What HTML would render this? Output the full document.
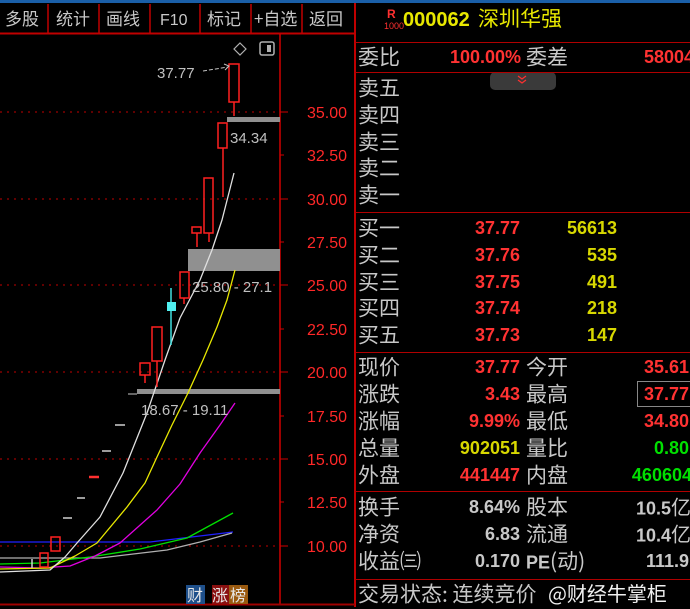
<!DOCTYPE html>
<html><head><meta charset="utf-8">
<style>
html,body{margin:0;padding:0;background:#000;}
body{width:690px;height:607px;position:relative;overflow:hidden;font-family:"Liberation Sans","Noto Sans CJK SC",sans-serif;}
.t{position:absolute;white-space:nowrap;line-height:1;}
.lb{font-family:"Noto Sans CJK SC","WenQuanYi Zen Hei",sans-serif;font-size:21px;color:#c8c8c8;transform:translateY(-50%);}
.n{font-family:"Liberation Sans",sans-serif;font-weight:bold;font-size:18px;transform:translateY(-50%);}
.r{color:#ff3232}.y{color:#d8d800}.g{color:#00e000}.w{color:#c8c8c8}
.hl{position:absolute;left:355px;width:335px;height:1px;background:#b00000;}
</style></head><body>
<svg width="690" height="607" style="position:absolute;left:0;top:0">
<rect x="0" y="0" width="690" height="3" fill="#1a5fa8"/>
<line x1="0" y1="33.5" x2="355" y2="33.5" stroke="#c00000" stroke-width="2"/>
<g stroke="#c00000" stroke-width="1.5">
<line x1="48" y1="4" x2="48" y2="33"/><line x1="99" y1="4" x2="99" y2="33"/><line x1="150" y1="4" x2="150" y2="33"/><line x1="200" y1="4" x2="200" y2="33"/><line x1="251" y1="4" x2="251" y2="33"/><line x1="302" y1="4" x2="302" y2="33"/>
</g>
<g font-family="Noto Sans CJK SC,sans-serif" font-size="17" fill="#c8c8c8">
<text x="5" y="25">多股</text><text x="56" y="25">统计</text><text x="106" y="25">画线</text>
<text x="160" y="25" font-family="Liberation Sans,sans-serif" font-size="16">F10</text>
<text x="207" y="25">标记</text><text x="254" y="25">+自选</text><text x="309" y="25">返回</text>
</g>
<line x1="280" y1="34" x2="280" y2="604" stroke="#d00000" stroke-width="1.5"/>
<line x1="355" y1="3" x2="355" y2="607" stroke="#c00000" stroke-width="2"/>
<line x1="0" y1="604.5" x2="355" y2="604.5" stroke="#a00000" stroke-width="2"/>
<g stroke="#c00000" stroke-width="1" stroke-dasharray="2,5">
<line x1="0" y1="112" x2="280" y2="112"/><line x1="0" y1="199" x2="280" y2="199"/><line x1="0" y1="285" x2="280" y2="285"/><line x1="0" y1="372" x2="280" y2="372"/><line x1="0" y1="459" x2="280" y2="459"/><line x1="0" y1="546" x2="280" y2="546"/>
</g>
<g stroke="#d00000" stroke-width="1">
<line x1="280" y1="112" x2="288" y2="112"/><line x1="280" y1="155" x2="284" y2="155"/><line x1="280" y1="199" x2="288" y2="199"/><line x1="280" y1="242" x2="284" y2="242"/><line x1="280" y1="285" x2="288" y2="285"/><line x1="280" y1="329" x2="284" y2="329"/><line x1="280" y1="372" x2="288" y2="372"/><line x1="280" y1="416" x2="284" y2="416"/><line x1="280" y1="459" x2="288" y2="459"/><line x1="280" y1="502" x2="284" y2="502"/><line x1="280" y1="546" x2="288" y2="546"/>
</g>
<g font-family="Liberation Sans,sans-serif" font-size="16" fill="#ff2828" text-anchor="end">
<text x="347" y="118">35.00</text><text x="347" y="161">32.50</text><text x="347" y="205">30.00</text><text x="347" y="248">27.50</text><text x="347" y="291">25.00</text><text x="347" y="335">22.50</text><text x="347" y="378">20.00</text><text x="347" y="422">17.50</text><text x="347" y="465">15.00</text><text x="347" y="508">12.50</text><text x="347" y="552">10.00</text>
</g>
<rect x="227" y="117" width="53" height="5" fill="#909090"/>
<rect x="188" y="249" width="92" height="22" fill="#909090"/>
<rect x="137" y="389" width="143" height="5" fill="#909090"/>
<line x1="128" y1="394" x2="137" y2="394" stroke="#c8c8c8" stroke-width="1"/>
<g fill="none" stroke-width="1.3" stroke-linejoin="round">
<polyline points="0,542 150,542 233,532" stroke="#2020ff"/>
<polyline points="0,558 100,558 167,550 200,542 232,533" stroke="#b0b0b0"/>
<polyline points="0,564 40,563 90,557 140,549 187,538 233,513" stroke="#00e000"/>
<polyline points="0,567 40,568 70,566 95,556 120,543 157,510 180,484 200,453 220,425 235,403" stroke="#e000e0"/>
<polyline points="0,569 50,568 75,556 97,543 127,507 145,483 157,457 172,425 188,393 203,360 217,327 227,300 235,270" stroke="#e8e800"/>
<polyline points="0,572 50,570 65,557 77,543 100,517 123,473 147,413 165,360 180,318 200,280 212,250 222,220 234,173" stroke="#e0e0e0"/>
</g>
<g stroke-width="1.5">
<line x1="63" y1="518" x2="72" y2="518" stroke="#d0d0d0"/>
<line x1="77" y1="498" x2="85" y2="498" stroke="#d0d0d0"/>
<line x1="89" y1="477" x2="99" y2="477" stroke="#ff3030" stroke-width="2.5"/>
<line x1="102" y1="451" x2="111" y2="451" stroke="#d0d0d0"/>
<line x1="115" y1="425" x2="125" y2="425" stroke="#d0d0d0"/>
<line x1="32" y1="559" x2="32" y2="568" stroke="#d0d0d0"/>
</g>
<g fill="none" stroke="#ff2020" stroke-width="1.5">
<rect x="40" y="553" width="8" height="14"/>
<rect x="51" y="537" width="9" height="14"/>
<line x1="145" y1="375" x2="145" y2="383"/><rect x="140" y="363" width="10" height="12"/>
<line x1="157" y1="361" x2="157" y2="387"/><rect x="152" y="327" width="10" height="34"/>
<line x1="184" y1="298" x2="184" y2="304"/><rect x="180" y="272" width="9" height="26"/>
<line x1="197" y1="233" x2="197" y2="247"/><rect x="192" y="227" width="9" height="6"/>
<line x1="209" y1="233" x2="209" y2="242"/><rect x="204" y="178" width="9" height="55"/>
<line x1="223" y1="148" x2="223" y2="197"/><rect x="218" y="123" width="9" height="25"/>
<line x1="234" y1="102" x2="234" y2="116"/><rect x="229" y="64" width="10" height="38"/>
</g>
<line x1="171" y1="288" x2="171" y2="345" stroke="#40e0e0" stroke-width="1.5"/>
<rect x="167" y="302" width="9" height="9" fill="#50f0f0"/>
<g font-family="Liberation Sans,sans-serif" font-size="15" fill="#c0c0c0">
<text x="157" y="78">37.77</text>
<text x="230" y="143">34.34</text>
<text x="192" y="292">25.80 - 27.1</text>
<text x="141" y="415">18.67 - 19.11</text>
</g>
<path d="M203 71 L228 67" stroke="#c0c0c0" stroke-width="1" stroke-dasharray="4,2"/>
<path d="M224 64 L229 66 L225 70" stroke="#c0c0c0" fill="none" stroke-width="1"/>
<path d="M240 43 L246 49 L240 55 L234 49 Z" fill="none" stroke="#b0b0b0" stroke-width="1.2"/>
<rect x="260" y="42" width="14" height="13" rx="2" fill="none" stroke="#b0b0b0" stroke-width="1.5"/>
<rect x="267" y="45" width="4" height="7" fill="#b0b0b0"/>
<rect x="186" y="585" width="19" height="19" fill="#1e4f8a"/>
<rect x="212" y="585" width="17" height="19" fill="#8a1010"/>
<rect x="229" y="585" width="19" height="19" fill="#9a5a10"/>
<g font-family="Noto Sans CJK SC,sans-serif" font-size="16" fill="#e8e8e8">
<text x="187" y="601">财</text><text x="212" y="601">涨</text><text x="230" y="601">榜</text>
</g>
<rect x="490" y="72" width="66" height="18" rx="5" fill="#3a3a3a"/>
<path d="M518 76 L522 79 L526 76 M518 80 L522 83 L526 80" stroke="#ff3030" fill="none" stroke-width="1.2"/>
</svg>

<div class="t" style="left:387px;top:8px;color:#ff3030;font-size:12px;font-weight:bold">R</div>
<div class="t" style="left:384px;top:22px;color:#ff3030;font-size:9px">1000</div>
<div class="t" style="left:403px;top:10px;color:#e8e800;font-size:20px;font-weight:bold;font-family:'Liberation Sans',sans-serif">000062</div>
<div class="t" style="left:478px;top:8px;color:#e8e800;font-size:21px;font-family:'Noto Sans CJK SC',sans-serif">深圳华强</div>

<div class="hl" style="top:42px"></div>
<div class="hl" style="top:72px"></div>
<div class="hl" style="top:212px"></div>
<div class="hl" style="top:352px"></div>
<div class="hl" style="top:491px"></div>
<div class="hl" style="top:579px"></div>

<div class="t lb" style="left:358px;top:57px">委比</div>
<div class="t n r" style="right:169px;top:57px">100.00%</div>
<div class="t lb" style="left:526px;top:57px">委差</div>
<div class="t n r" style="right:-4px;top:57px">58004</div>

<div class="t lb" style="left:358px;top:88px">卖五</div>
<div class="t lb" style="left:358px;top:115px">卖四</div>
<div class="t lb" style="left:358px;top:142px">卖三</div>
<div class="t lb" style="left:358px;top:168px">卖二</div>
<div class="t lb" style="left:358px;top:195px">卖一</div>

<div class="t lb" style="left:358px;top:228px">买一</div><div class="t n r" style="right:170px;top:228px">37.77</div><div class="t n y" style="right:73px;top:228px">56613</div>
<div class="t lb" style="left:358px;top:255px">买二</div><div class="t n r" style="right:170px;top:255px">37.76</div><div class="t n y" style="right:73px;top:255px">535</div>
<div class="t lb" style="left:358px;top:282px">买三</div><div class="t n r" style="right:170px;top:282px">37.75</div><div class="t n y" style="right:73px;top:282px">491</div>
<div class="t lb" style="left:358px;top:308px">买四</div><div class="t n r" style="right:170px;top:308px">37.74</div><div class="t n y" style="right:73px;top:308px">218</div>
<div class="t lb" style="left:358px;top:335px">买五</div><div class="t n r" style="right:170px;top:335px">37.73</div><div class="t n y" style="right:73px;top:335px">147</div>

<div class="t lb" style="left:358px;top:367px">现价</div><div class="t n r" style="right:170px;top:367px">37.77</div><div class="t lb" style="left:526px;top:367px">今开</div><div class="t n r" style="right:1px;top:367px">35.61</div>
<div class="t lb" style="left:358px;top:394px">涨跌</div><div class="t n r" style="right:170px;top:394px">3.43</div><div class="t lb" style="left:526px;top:394px">最高</div>
<div style="position:absolute;left:637px;top:381px;width:60px;height:24px;border:1px solid #888"></div>
<div class="t n r" style="right:1px;top:394px">37.77</div>
<div class="t lb" style="left:358px;top:421px">涨幅</div><div class="t n r" style="right:170px;top:421px">9.99%</div><div class="t lb" style="left:526px;top:421px">最低</div><div class="t n r" style="right:1px;top:421px">34.80</div>
<div class="t lb" style="left:358px;top:448px">总量</div><div class="t n y" style="right:170px;top:448px">902051</div><div class="t lb" style="left:526px;top:448px">量比</div><div class="t n g" style="right:1px;top:448px">0.80</div>
<div class="t lb" style="left:358px;top:475px">外盘</div><div class="t n r" style="right:170px;top:475px">441447</div><div class="t lb" style="left:526px;top:475px">内盘</div><div class="t n g" style="right:-2px;top:475px">460604</div>

<div class="t lb" style="left:358px;top:507px">换手</div><div class="t n w" style="right:170px;top:507px">8.64%</div><div class="t lb" style="left:526px;top:507px">股本</div><div class="t n w" style="right:-1px;top:507px">10.5<span style="font-family:'Noto Sans CJK SC';font-weight:normal;font-size:20px">亿</span></div>
<div class="t lb" style="left:358px;top:534px">净资</div><div class="t n w" style="right:170px;top:534px">6.83</div><div class="t lb" style="left:526px;top:534px">流通</div><div class="t n w" style="right:-1px;top:534px">10.4<span style="font-family:'Noto Sans CJK SC';font-weight:normal;font-size:20px">亿</span></div>
<div class="t lb" style="left:358px;top:561px">收益㈢</div><div class="t n w" style="right:170px;top:561px">0.170</div><div class="t lb" style="left:526px;top:561px"><span style="font-family:'Liberation Sans';font-weight:bold;font-size:18px">PE</span>(动)</div><div class="t n w" style="right:1px;top:561px">111.9</div>

<div class="t lb" style="left:358px;top:594px">交易状态: 连续竞价</div>
<div class="t" style="left:548px;top:583px;font-size:20px;color:#f0f0f0;font-family:'Noto Sans CJK SC',sans-serif">@财经牛掌柜</div>
</body></html>
